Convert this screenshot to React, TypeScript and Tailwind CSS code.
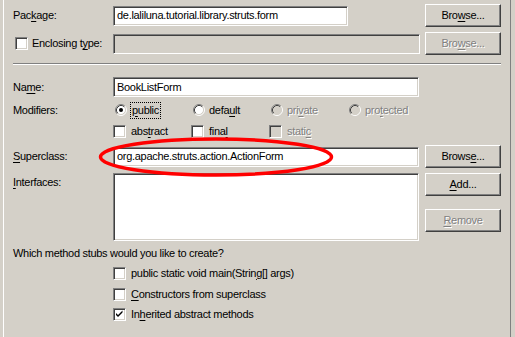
import React from 'react'

const U = ({ children }: { children: React.ReactNode }) => (
  <span className="underline underline-offset-[2px] decoration-1">{children}</span>
)

function Field({ value, disabled, className }: { value?: string; disabled?: boolean; className: string }) {
  return (
    <div
      className={`h-[20px] flex items-center px-[3px] border border-t-[#808080] border-l-[#808080] border-r-white border-b-white shadow-[inset_1px_1px_0_#404040,inset_-1px_-1px_0_#d4d0c8] ${
        disabled ? 'bg-[#d4d0c8]' : 'bg-white'
      } ${className}`}
    >
      {value}
    </div>
  )
}

function Button({ children, disabled, className = '' }: { children: React.ReactNode; disabled?: boolean; className?: string }) {
  return (
    <div
      className={`w-[76px] h-[23px] flex items-center justify-center border border-t-white border-l-white border-r-[#404040] border-b-[#404040] shadow-[inset_-1px_-1px_0_#808080] ${
        disabled ? 'text-[#808080] [text-shadow:1px_1px_0_#fff]' : 'text-black'
      } ${className}`}
    >
      {children}
    </div>
  )
}

function Radio({ checked, disabled }: { checked?: boolean; disabled?: boolean }) {
  return (
    <svg width="12" height="12" viewBox="0 0 12 12" className="shrink-0">
      <circle cx="6" cy="6" r="4.5" fill={disabled ? '#d4d0c8' : '#fff'} />
      <path d="M2.11 9.89 A5.5 5.5 0 0 1 9.89 2.11" fill="none" stroke="#808080" />
      <path d="M9.89 2.11 A5.5 5.5 0 0 1 2.11 9.89" fill="none" stroke="#fff" />
      <path d="M2.82 9.18 A4.5 4.5 0 0 1 9.18 2.82" fill="none" stroke="#404040" />
      <path d="M9.18 2.82 A4.5 4.5 0 0 1 2.82 9.18" fill="none" stroke="#d4d0c8" />
      {checked && <circle cx="6" cy="6" r="2" fill="#000" />}
    </svg>
  )
}

function Check({ checked, disabled }: { checked?: boolean; disabled?: boolean }) {
  return (
    <div
      className={`relative w-[13px] h-[13px] shrink-0 border border-t-[#808080] border-l-[#808080] border-r-white border-b-white shadow-[inset_1px_1px_0_#404040,inset_-1px_-1px_0_#d4d0c8] ${
        disabled ? 'bg-[#d4d0c8]' : 'bg-white'
      }`}
    >
      {checked && (
        <svg width="13" height="13" viewBox="0 0 13 13" className="absolute -left-[1px] -top-[1px]">
          <path d="M3 5 L5 7 L9.5 2.5 V4.5 L5 9 L3 7 Z" fill="#000" />
        </svg>
      )}
    </div>
  )
}

const off = 'text-[#808080] [text-shadow:1px_1px_0_#fff]'

export default function App() {
  return (
    <div className="relative w-[515px] h-[337px] bg-[#d4d0c8] flex pl-[3px] pr-[4px] font-['Liberation_Sans',sans-serif] text-[11px] tracking-[-0.3px] text-black leading-none">
      <div className="flex-1 border-l border-white border-r border-r-[#808080] pl-[9px]">
        <div className="w-[488px] flex flex-col">
          {/* Package */}
          <div className="flex items-center h-[23px] mt-[4px]">
            <div className="w-[100px]">
              Pac<U>k</U>age:
            </div>
            <Field value="de.laliluna.tutorial.library.struts.form" className="w-[235px]" />
            <Button className="ml-auto">
              Bro<U>w</U>se...
            </Button>
          </div>

          {/* Enclosing type */}
          <div className="flex items-center h-[23px] mt-[5px]">
            <div className="w-[100px] flex items-center gap-[4px] pl-[2px]">
              <Check />
              <span>
                Enclosing t<U>y</U>pe:
              </span>
            </div>
            <Field disabled className="w-[307px]" />
            <Button disabled className="ml-auto">
              Bro<U>w</U>se...
            </Button>
          </div>

          <div className="mt-[8px] h-[2px] border-t border-t-[#808080] border-b border-b-white" />

          {/* Name */}
          <div className="flex items-center h-[20px] mt-[12px]">
            <div className="w-[100px]">
              Na<U>m</U>e:
            </div>
            <Field value="BookListForm" className="w-[306px]" />
          </div>

          {/* Modifiers */}
          <div className="flex items-center h-[14px] mt-[6px]">
            <div className="w-[100px]">Modifiers:</div>
            <div className="grid grid-cols-[78px_78px_78px_auto] pl-[2px]">
              <div className="flex items-center gap-[3px]">
                <Radio checked />
                <span className="border border-dotted border-black px-[1px] py-[2px] -my-[2px]">
                  <U>p</U>ublic
                </span>
              </div>
              <div className="flex items-center gap-[3px]">
                <Radio />
                <span className="pl-[1px]">
                  defa<U>u</U>lt
                </span>
              </div>
              <div className={`flex items-center gap-[4px] ${off}`}>
                <Radio disabled />
                <span>
                  pri<U>v</U>ate
                </span>
              </div>
              <div className={`flex items-center gap-[4px] ${off}`}>
                <Radio disabled />
                <span>
                  pro<U>t</U>ected
                </span>
              </div>
            </div>
          </div>

          {/* abstract/final/static */}
          <div className="flex items-center h-[14px] mt-[7px]">
            <div className="w-[100px]" />
            <div className="grid grid-cols-[78px_78px_78px]">
              <div className="flex items-center gap-[5px]">
                <Check />
                <span>
                  abs<U>t</U>ract
                </span>
              </div>
              <div className="flex items-center gap-[5px]">
                <Check />
                <span>
                  fina<U>l</U>
                </span>
              </div>
              <div className={`flex items-center gap-[5px] ${off}`}>
                <Check disabled />
                <span>
                  stati<U>c</U>
                </span>
              </div>
            </div>
          </div>

          {/* Superclass */}
          <div className="flex items-center h-[23px] mt-[7px]">
            <div className="w-[100px]">
              <U>S</U>uperclass:
            </div>
            <Field value="org.apache.struts.action.ActionForm" className="w-[306px]" />
            <Button className="ml-auto">
              Brows<U>e</U>...
            </Button>
          </div>

          {/* Interfaces */}
          <div className="flex h-[68px] mt-[5px]">
            <div className="w-[100px] pt-[4px]">
              <U>I</U>nterfaces:
            </div>
            <div className="w-[306px] h-[68px] bg-white border border-t-[#808080] border-l-[#808080] border-r-white border-b-white shadow-[inset_1px_1px_0_#404040,inset_-1px_-1px_0_#d4d0c8]" />
            <div className="ml-auto flex flex-col gap-[13px]">
              <Button>
                <U>A</U>dd...
              </Button>
              <Button disabled>
                <U>R</U>emove
              </Button>
            </div>
          </div>

          <div className="flex items-center h-[14px] mt-[5px]">Which method stubs would you like to create?</div>

          <div className="flex flex-col pl-[100px]">
            <div className="flex items-center gap-[5px] h-[14px] mt-[6px]">
              <Check />
              <span>
                public static void main(Strin<U>g</U>[] args)
              </span>
            </div>
            <div className="flex items-center gap-[5px] h-[14px] mt-[7px]">
              <Check />
              <span>
                <U>C</U>onstructors from superclass
              </span>
            </div>
            <div className="flex items-center gap-[5px] h-[14px] mt-[6px]">
              <Check checked />
              <span>
                In<U>h</U>erited abstract methods
              </span>
            </div>
          </div>
        </div>
      </div>

      <svg className="absolute left-0 top-0 pointer-events-none" width="515" height="337" viewBox="0 0 515 337">
        <ellipse cx="216" cy="157" rx="115.5" ry="18" fill="none" stroke="#ff0000" strokeWidth="3.5" />
      </svg>
    </div>
  )
}
